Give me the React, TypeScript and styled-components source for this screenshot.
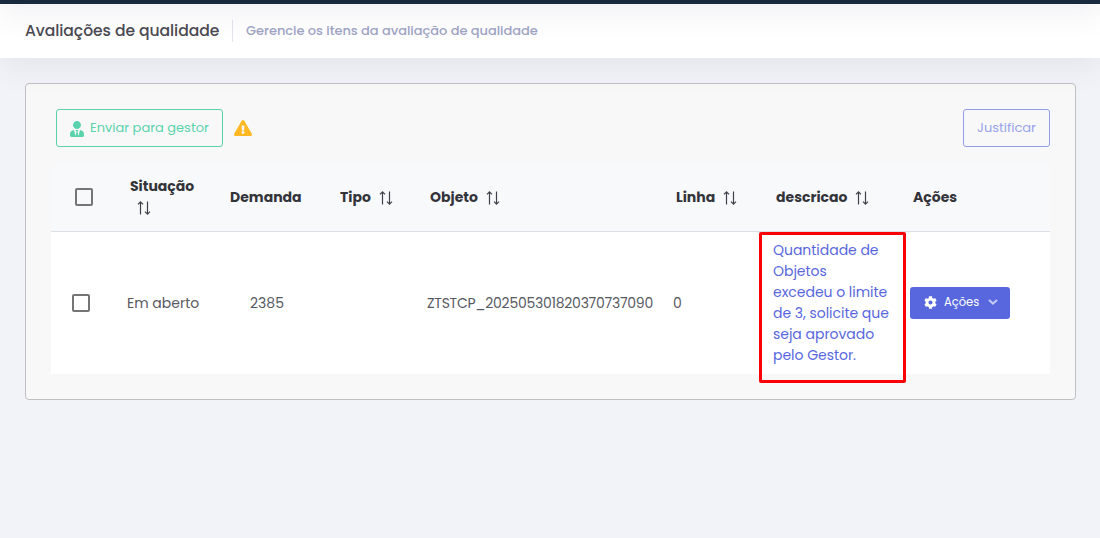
import React from "react";
import styled, { createGlobalStyle } from "styled-components";
import { FaUserTie, FaExclamationTriangle, FaCog } from "react-icons/fa";

const GlobalStyle = createGlobalStyle`
  * { box-sizing: border-box; }
  html, body { margin: 0; padding: 0; }
  body {
    background: #f2f3f8;
    font-family: Poppins, Inter, "Liberation Sans", sans-serif;
    font-size: 14px;
    color: #575962;
    overflow: hidden;
  }
  button { font-family: inherit; cursor: pointer; }
`;

const Page = styled.div`
  display: flex;
  flex-direction: column;
  height: 538px;
  overflow: hidden;
`;

const TopBar = styled.div`
  flex: none;
  height: 64px;
  margin-top: -60px;
  background: #1a2a3e;
  position: relative;
  z-index: 3;
  box-shadow: 0 10px 30px rgba(82, 63, 105, 0.08);
`;

const SubHeader = styled.header`
  flex: none;
  display: flex;
  align-items: center;
  height: 54px;
  padding: 0 25px;
  background: #fff;
  position: relative;
  z-index: 2;
  box-shadow: 0 10px 30px rgba(82, 63, 105, 0.08);
`;

const Fit = styled.span<{ $track?: number }>`
  letter-spacing: ${(p) => p.$track ?? 0}px;
  white-space: nowrap;
`;

const Title = styled.h1`
  margin: 0;
  width: 207px;
  font-size: 15.6px;
  line-height: 22px;
  font-weight: 500;
  color: #4b4a52;
`;

const Divider = styled.span`
  width: 1px;
  height: 22px;
  margin-right: 13px;
  background: #e2e3ee;
`;

const Subtitle = styled.span`
  font-size: 13px;
  line-height: 20px;
  font-weight: 500;
  color: #a0a5c5;
`;

const Card = styled.main`
  margin: 25px 24px 0 25px;
  height: 317px;
  padding: 25px;
  border: 1px solid #c0c0c4;
  border-radius: 4px;
  background: #f8f8f8;
`;

const Toolbar = styled.div`
  display: flex;
  align-items: center;
  height: 38px;
  padding-left: 5px;
`;

const OutlineButton = styled.button<{ $color: string; $edge: string; $width: number }>`
  display: flex;
  align-items: center;
  width: ${(p) => p.$width}px;
  height: 38px;
  padding: 0 0 1px 13px;
  border: 1px solid ${(p) => p.$edge};
  border-radius: 3px;
  background: transparent;
  color: ${(p) => p.$color};
  font-size: 13px;
  svg { width: 14px; height: 16px; margin: 3px 6px 0 0; }
`;

const Warning = styled.span`
  display: flex;
  margin: 0 auto 0 11px;
  color: #ffb822;
  svg { width: 18px; height: 16px; }
`;

const Table = styled.div`
  margin-top: 18px;
  width: 999px;
`;

const Row = styled.div<{ $head?: boolean }>`
  display: grid;
  grid-template-columns: 69px 100px 110px 90px 246px 100px 137px 147px;
  align-items: center;
  height: ${(p) => (p.$head ? 67 : 142)}px;
  background: ${(p) => (p.$head ? "#f8f9fb" : "#fff")};
  border-bottom: ${(p) => (p.$head ? "1px solid #dcdfe6" : "0")};
  color: ${(p) => (p.$head ? "#33343a" : "#575962")};
  font-weight: ${(p) => (p.$head ? 700 : 400)};
`;

const HeadCell = styled.div<{ $stack?: boolean }>`
  display: flex;
  flex-direction: ${(p) => (p.$stack ? "column" : "row")};
  align-items: ${(p) => (p.$stack ? "flex-start" : "center")};
  padding: 0 0 2px 10px;
  line-height: 22px;
  font-size: 14px;
  svg { margin: ${(p) => (p.$stack ? "4px 0 4px 7px" : "1px 0 0 8px")}; }
`;

const Cell = styled.div<{ $indent?: number }>`
  position: relative;
  padding-left: ${(p) => p.$indent ?? 7}px;
  line-height: 21px;
`;

const CheckCell = styled.div<{ $left: number; $lift?: number }>`
  display: flex;
  padding-left: ${(p) => p.$left}px;
  padding-bottom: ${(p) => p.$lift ?? 0}px;
`;

const CheckBox = styled.span`
  width: 18px;
  height: 18px;
  border: 2px solid #757575;
  border-radius: 2px;
`;

const Description = styled.div`
  display: flex;
  flex-direction: column;
  color: #5867dd;
`;

const Highlight = styled.div`
  position: absolute;
  left: -7px;
  top: -8px;
  width: 147px;
  height: 151px;
  border: 3px solid #fb0007;
  border-radius: 2px;
`;

const ActionButton = styled.button`
  display: flex;
  align-items: center;
  width: 100px;
  height: 32px;
  padding: 0 0 2px 14px;
  border: 0;
  border-radius: 3px;
  background: #5867dd;
  color: #fff;
  font-size: 11.5px;
  svg:first-child { width: 13px; height: 13px; margin-right: 7px; }
  svg:last-child { margin-left: 9px; }
`;

const SortIcon = () => (
  <svg width="14" height="14" viewBox="0 0 14 14" fill="none" stroke="#3f4148" strokeWidth="1.2">
    <path d="M3.5 13.4V1.2M1 3.4L3.5.9L6 3.4M10.5.6v12.2M8 10.6l2.5 2.5l2.5-2.5" />
  </svg>
);

const ChevronIcon = () => (
  <svg width="10" height="6" viewBox="0 0 10 6" fill="none" stroke="#c5caf4" strokeWidth="2">
    <path d="M1 .9L5 4.6L9 .9" />
  </svg>
);

const descriptionLines = [
  "Quantidade de",
  "Objetos",
  "excedeu o limite",
  "de 3, solicite que",
  "seja aprovado",
  "pelo Gestor.",
];

const columns = [
  { label: "Situação", sortable: true, stack: true },
  { label: "Demanda", sortable: false },
  { label: "Tipo", sortable: true },
  { label: "Objeto", sortable: true },
  { label: "Linha", sortable: true },
  { label: "descricao", sortable: true },
  { label: "Ações", sortable: false },
];

export default function App() {
  return (
    <>
      <GlobalStyle />
      <Page>
        <TopBar />
        <SubHeader>
          <Title><Fit $track={-0.06}>Avaliações de qualidade</Fit></Title>
          <Divider />
          <Subtitle><Fit $track={-0.04}>Gerencie os itens da avaliação de qualidade</Fit></Subtitle>
        </SubHeader>
        <Card>
          <Toolbar>
            <OutlineButton $color="#5ad3ad" $edge="#5ad3ad" $width={167}>
              <FaUserTie />
              <Fit>Enviar para gestor</Fit>
            </OutlineButton>
            <Warning><FaExclamationTriangle /></Warning>
            <OutlineButton $color="#9aa3ea" $edge="#939dea" $width={87}>
              <Fit>Justificar</Fit>
            </OutlineButton>
          </Toolbar>
          <Table>
            <Row $head>
              <CheckCell $left={24} $lift={2}><CheckBox /></CheckCell>
              {columns.map((c) => (
                <HeadCell key={c.label} $stack={c.stack}>
                  <Fit>{c.label}</Fit>
                  {c.sortable && <SortIcon />}
                </HeadCell>
              ))}
            </Row>
            <Row>
              <CheckCell $left={21}><CheckBox /></CheckCell>
              <Cell><Fit>Em aberto</Fit></Cell>
              <Cell $indent={30}><Fit>2385</Fit></Cell>
              <Cell />
              <Cell><Fit $track={-0.26}>ZTSTCP_202505301820370737090</Fit></Cell>
              <Cell><Fit>0</Fit></Cell>
              <Cell>
                <Description>
                  {descriptionLines.map((line) => (
                    <Fit key={line} $track={-0.03}>{line}</Fit>
                  ))}
                </Description>
                <Highlight />
              </Cell>
              <Cell>
                <ActionButton>
                  <FaCog />
                  <Fit>Ações</Fit>
                  <ChevronIcon />
                </ActionButton>
              </Cell>
            </Row>
          </Table>
        </Card>
      </Page>
    </>
  );
}
